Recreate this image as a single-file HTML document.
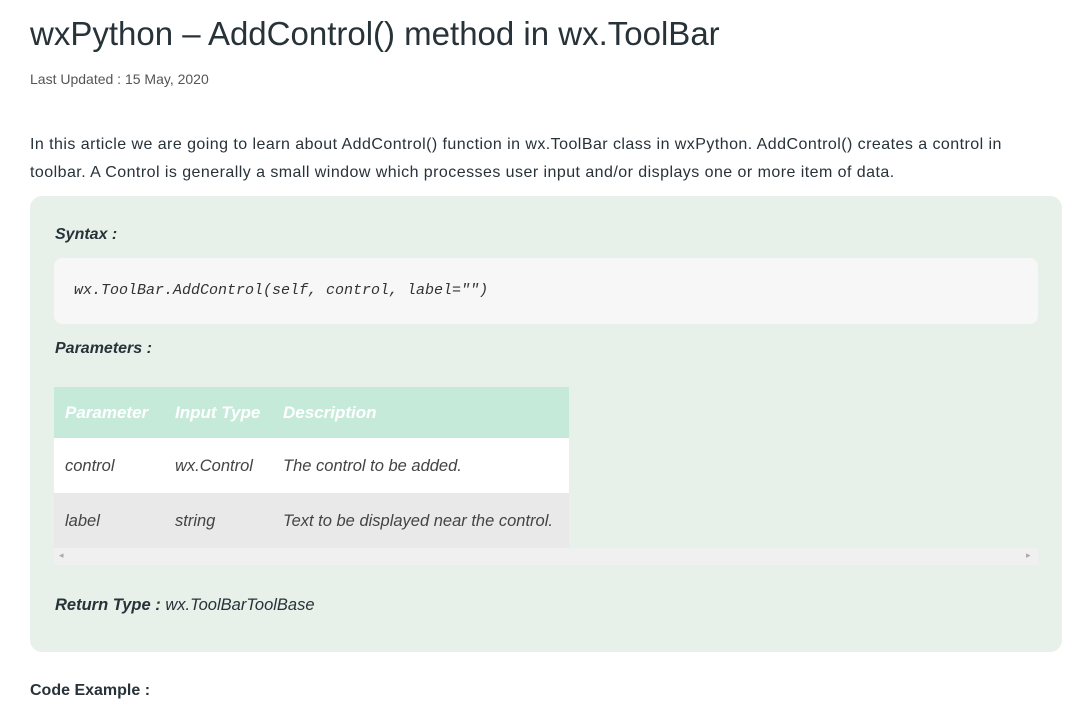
<!DOCTYPE html>
<html><head><style>
body{margin:0;background:#fff;font-family:"Liberation Sans",sans-serif;color:#273239;width:1083px;height:717px;overflow:hidden;position:relative}
.a{position:absolute;white-space:nowrap}
</style></head><body>
<div class="a" style="left:30px;top:15px;font-size:33px;color:#273239">wxPython – AddControl() method in wx.ToolBar</div>
<div class="a" style="left:30px;top:71px;font-size:14px;color:#555">Last Updated : 15 May, 2020</div>
<div class="a" style="left:30px;top:131px;font-size:16px;line-height:28px;color:#273239;letter-spacing:0.45px">In this article we are going to learn about AddControl() function in wx.ToolBar class in wxPython. AddControl() creates a control in<br>toolbar. A Control is generally a small window which processes user input and/or displays one or more item of data.</div>
<div class="a" style="left:30px;top:196px;width:1032px;height:456px;background:#e7f1ea;border-radius:12px"></div>
<div class="a" style="left:55px;top:226px;font-size:16px;font-weight:bold;font-style:italic">Syntax :</div>
<div class="a" style="left:54px;top:258px;width:984px;height:66px;background:#f7f7f7;border-radius:8px"></div>
<div class="a" style="left:74px;top:282px;font-family:'Liberation Mono',monospace;font-style:italic;font-size:15px;color:#333">wx.ToolBar.AddControl(self, control, label="")</div>
<div class="a" style="left:55px;top:340px;font-size:16px;font-weight:bold;font-style:italic">Parameters :</div>
<div class="a" style="left:54px;top:387px;width:515px;height:51px;background:#c6eada"></div>
<div class="a" style="left:54px;top:438px;width:515px;height:55px;background:#fff"></div>
<div class="a" style="left:54px;top:493px;width:515px;height:55px;background:#e9e9e9"></div>
<div class="a" style="left:54px;top:548px;width:984px;height:17px;background:#f0f0f0"></div>
<div class="a" style="left:59px;top:550px;font-size:9px;color:#aaa">◂</div>
<div class="a" style="left:1026px;top:550px;font-size:9px;color:#aaa">▸</div>
<div class="a" style="left:65px;top:403px;font-size:17px;font-style:italic;font-weight:bold;color:#fff">Parameter</div>
<div class="a" style="left:175px;top:403px;font-size:17px;font-style:italic;font-weight:bold;color:#fff">Input Type</div>
<div class="a" style="left:283px;top:403px;font-size:17px;font-style:italic;font-weight:bold;color:#fff">Description</div>
<div class="a" style="left:65px;top:457px;font-size:16.5px;font-style:italic;color:#444">control</div>
<div class="a" style="left:175px;top:457px;font-size:16.5px;font-style:italic;color:#444">wx.Control</div>
<div class="a" style="left:283px;top:457px;font-size:16.5px;font-style:italic;color:#444">The control to be added.</div>
<div class="a" style="left:65px;top:512px;font-size:16.5px;font-style:italic;color:#444">label</div>
<div class="a" style="left:175px;top:512px;font-size:16.5px;font-style:italic;color:#444">string</div>
<div class="a" style="left:283px;top:512px;font-size:16.5px;font-style:italic;color:#444">Text to be displayed near the control.</div>
<div class="a" style="left:55px;top:596px;font-size:16.5px;font-style:italic"><b>Return Type :</b> wx.ToolBarToolBase</div>
<div class="a" style="left:30px;top:682px;font-size:16px;font-weight:bold">Code Example :</div>
</body></html>
